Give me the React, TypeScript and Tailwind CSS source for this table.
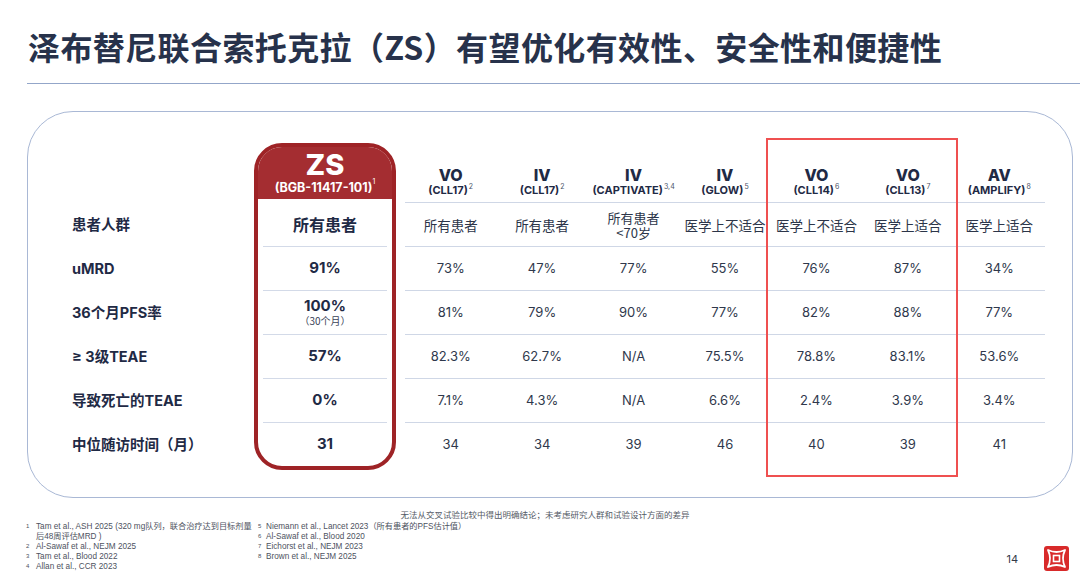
import React from 'react';

type Col = {
  name: string;
  trial: string;
  sup: string;
  pop: string[];
  vals: string[];
};

const cols: Col[] = [
  { name: 'VO', trial: '(CLL17)', sup: '2', pop: ['所有患者'], vals: ['73%', '81%', '82.3%', '7.1%', '34'] },
  { name: 'IV', trial: '(CLL17)', sup: '2', pop: ['所有患者'], vals: ['47%', '79%', '62.7%', '4.3%', '34'] },
  { name: 'IV', trial: '(CAPTIVATE)', sup: '3,4', pop: ['所有患者', '<70岁'], vals: ['77%', '90%', 'N/A', 'N/A', '39'] },
  { name: 'IV', trial: '(GLOW)', sup: '5', pop: ['医学上不适合'], vals: ['55%', '77%', '75.5%', '6.6%', '46'] },
  { name: 'VO', trial: '(CLL14)', sup: '6', pop: ['医学上不适合'], vals: ['76%', '82%', '78.8%', '2.4%', '40'] },
  { name: 'VO', trial: '(CLL13)', sup: '7', pop: ['医学上适合'], vals: ['87%', '88%', '83.1%', '3.9%', '39'] },
  { name: 'AV', trial: '(AMPLIFY)', sup: '8', pop: ['医学上适合'], vals: ['34%', '77%', '53.6%', '3.4%', '41'] },
];

const labels = ['患者人群', 'uMRD', '36个月PFS率', '≥ 3级TEAE', '导致死亡的TEAE', '中位随访时间（月）'];

const refsLeft = [
  { n: '1', t: 'Tam et al., ASH 2025 (320 mg队列，联合治疗达到目标剂量后48周评估MRD )' },
  { n: '2', t: 'Al-Sawaf et al., NEJM 2025' },
  { n: '3', t: 'Tam et al., Blood 2022' },
  { n: '4', t: 'Allan et al., CCR 2023' },
];

const refsRight = [
  { n: '5', t: 'Niemann et al., Lancet 2023（所有患者的PFS估计值）' },
  { n: '6', t: 'Al-Sawaf et al., Blood 2020' },
  { n: '7', t: 'Eichorst et al., NEJM 2023' },
  { n: '8', t: 'Brown et al., NEJM 2025' },
];

const Logo = () => (
  <svg width="25" height="25" viewBox="0 0 25 25">
    <rect x="0" y="0" width="25" height="25" rx="3" fill="#d82a2a" />
    <path d="M4 4 Q12.5 8 21 4 Q17 12.5 21 21 Q12.5 17 4 21 Q8 12.5 4 4 Z" fill="none" stroke="#fff" strokeWidth="1.8" strokeLinejoin="round" />
    <rect x="9.5" y="9.5" width="6" height="6" fill="none" stroke="#fff" strokeWidth="1.6" />
  </svg>
);

export default function App() {
  return (
    <div className="w-[1080px] h-[582px] bg-white overflow-hidden font-['Inter','Noto_Sans_CJK_SC',sans-serif] text-[#1f2a45]">
      <h1 className="pl-[28px] pt-[24px] h-[68px] text-[32px] leading-[44px] font-bold tracking-[0.4px] text-[#27324b] font-['Noto_Sans_CJK_SC',sans-serif]">
        泽布替尼联合索托克拉（ZS）有望优化有效性、安全性和便捷性
      </h1>
      <div className="ml-[27px] mt-[15px] h-px bg-[#93a6c9]" />

      <div className="relative ml-[27px] mt-[27px] w-[1046px] h-[387px] rounded-[46px] border border-[#a9b8d5]">
        <div className="flex pt-[31px]">
          {/* row labels */}
          <div className="w-[226px] flex flex-col">
            <div className="h-[60px]" />
            {labels.map((l) => (
              <div key={l} className="h-[44px] flex items-center pl-[44px] text-[14.5px] font-bold text-[#1f2a45]">
                {l}
              </div>
            ))}
          </div>

          {/* ZS column */}
          <div className="w-[142px] h-[327px] rounded-[28px] border-[4px] border-[#9e2326] overflow-hidden flex flex-col">
            <div className="h-[53px] bg-[#a42d31] flex flex-col items-center justify-center text-white">
              <div className="text-[29px] leading-[30px] font-extrabold">ZS</div>
              <div className="text-[12.5px] leading-[16px] font-bold">
                (BGB-11417-101)<sup className="text-[7px] font-normal align-top relative top-[2px]">1</sup>
              </div>
            </div>
            <div className="mx-[5px] flex flex-col">
              <div className="h-[47px] flex items-center justify-center pt-[2px] text-[16px] font-bold font-['Noto_Sans_CJK_SC',sans-serif]">所有患者</div>
              <div className="h-[44px] flex items-center justify-center border-t border-[#d3dae8] text-[15px] font-bold">91%</div>
              <div className="h-[44px] flex flex-col items-center justify-center border-t border-[#d3dae8]">
                <div className="text-[15px] leading-[16px] font-bold">100%</div>
                <div className="text-[10px] leading-[14px] text-[#3a4358] font-['Noto_Sans_CJK_SC',sans-serif]">（30个月）</div>
              </div>
              <div className="h-[44px] flex items-center justify-center border-t border-[#d3dae8] text-[15px] font-bold">57%</div>
              <div className="h-[44px] flex items-center justify-center border-t border-[#d3dae8] text-[15px] font-bold">0%</div>
              <div className="h-[44px] flex items-center justify-center border-t border-[#d3dae8] text-[15px] font-bold">31</div>
            </div>
          </div>

          {/* comparator columns */}
          <div className="ml-[9px] w-[640px] grid grid-cols-7">
            {cols.map((c, i) => (
              <div key={i} className="flex flex-col">
                <div className="h-[60px] flex flex-col items-center justify-end pb-[5px] border-b border-[#cfd7e6]">
                  <div className="text-[16px] leading-[17px] font-extrabold text-[#1f2a45]">{c.name}</div>
                  <div className="text-[11px] leading-[13px] font-bold text-[#1f2a45] whitespace-nowrap">
                    {c.trial}
                    <sup className="text-[7px] font-normal align-top relative top-[3px] ml-[1px] text-[#4a5368]">{c.sup}</sup>
                  </div>
                </div>
                <div className="h-[44px] flex flex-col items-center justify-center border-b border-[#cfd7e6] text-[13.5px] text-[#2c3549] whitespace-nowrap font-['Noto_Sans_CJK_SC',sans-serif]">
                  {c.pop.map((p) => (
                    <div key={p} className={c.pop.length > 1 ? 'text-[13px] leading-[15px]' : 'leading-[18px]'}>{p}</div>
                  ))}
                </div>
                {c.vals.map((v, j) => (
                  <div
                    key={j}
                    className={`h-[44px] flex items-center justify-center text-[13px] text-[#2f384c] ${j < 4 ? 'border-b border-[#cfd7e6]' : ''}`}
                  >
                    {v}
                  </div>
                ))}
              </div>
            ))}
          </div>
        </div>

        {/* highlight around CLL14 / CLL13 */}
        <div className="absolute left-[738px] top-[26px] w-[192px] h-[339px] border-2 border-[#ef5050] pointer-events-none" />
      </div>

      <div className="mt-[11px] pl-[17px] w-[1073px] text-center text-[8.5px] leading-[10px] text-[#555b66] font-['Noto_Sans_CJK_SC',sans-serif]">
        无法从交叉试验比较中得出明确结论；未考虑研究人群和试验设计方面的差异
      </div>

      <div className="flex mt-[3px] text-[8.2px] leading-[10px] text-[#4d5260] font-['Liberation_Sans','Noto_Sans_CJK_SC',sans-serif]">
        <div className="pl-[26px] w-[254px] flex flex-col">
          {refsLeft.map((r) => (
            <div key={r.n} className="flex">
              <span className="w-[10px] shrink-0 text-[6px] leading-[9px]">{r.n}</span>
              <span className="w-[216px]">{r.t}</span>
            </div>
          ))}
        </div>
        <div className="pl-[4px] flex flex-col">
          {refsRight.map((r) => (
            <div key={r.n} className="flex">
              <span className="w-[8px] shrink-0 text-[6px] leading-[9px]">{r.n}</span>
              <span>{r.t}</span>
            </div>
          ))}
        </div>
        <div className="ml-auto mr-[11px] mt-[23px] flex items-center gap-[26px]">
          <span className="text-[11px] text-[#333a48] font-['Inter',sans-serif]">14</span>
          <Logo />
        </div>
      </div>
    </div>
  );
}
